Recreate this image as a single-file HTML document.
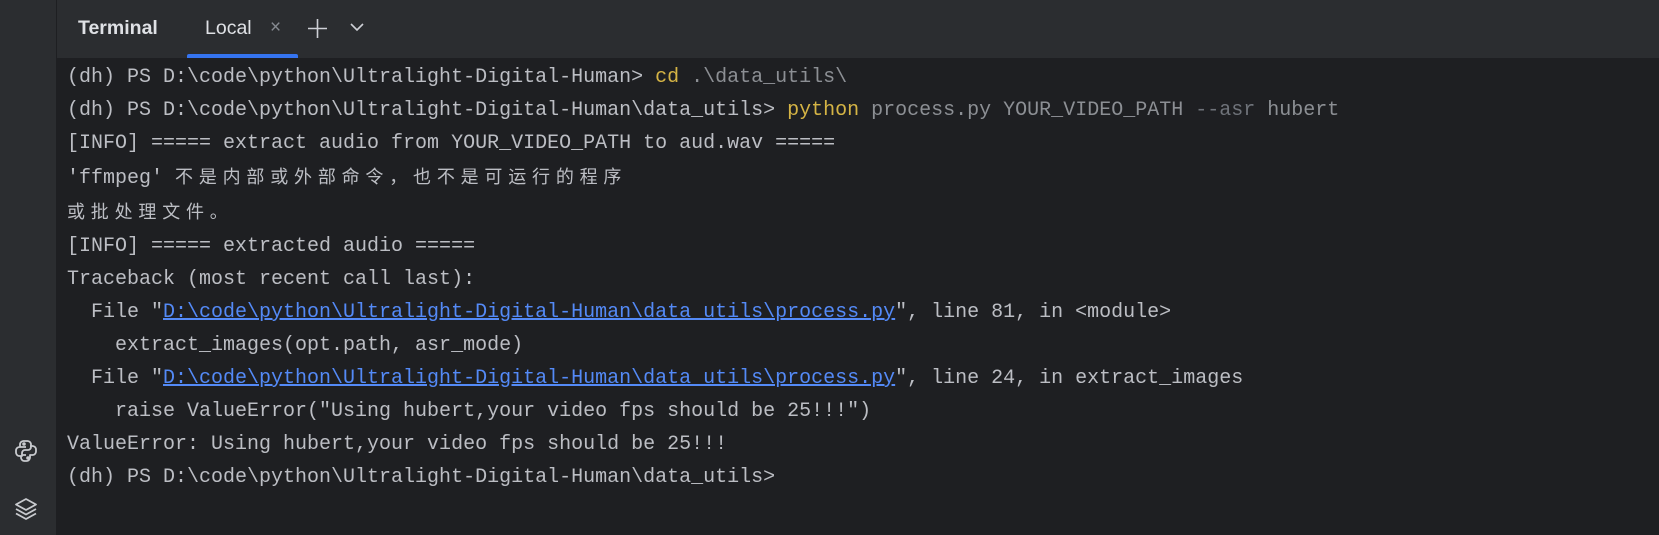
<!DOCTYPE html>
<html><head><meta charset="utf-8"><style>
*{margin:0;padding:0;box-sizing:border-box}
body{width:1659px;height:535px;background:#1e1f22;overflow:hidden;position:relative;font-family:"Liberation Sans",sans-serif}
#side{position:absolute;left:0;top:0;width:57px;height:535px;background:#2b2d30;border-right:1px solid #1e1f22}
#head{position:absolute;left:57px;top:0;right:0;height:58px;background:#2b2d30}
.t{position:absolute;top:17px;font-size:19.5px;color:#dfe1e5}
#term{position:absolute;left:67px;top:61px;font-family:"Liberation Mono",monospace;font-size:20px;line-height:33px;color:#bcbec4;white-space:pre}
.y{color:#d5b445}.g{color:#8c8f94}.d{color:#6f737a}
.l{color:#548af7;text-decoration:underline}
.c{font-family:"Noto Sans CJK SC",sans-serif;font-size:18px;letter-spacing:5.8px;line-height:33px}
</style></head><body>
<div id="side">
<svg style="position:absolute;left:13px;top:438px" width="26" height="26" viewBox="0 0 26 26" fill="none" stroke="#c8cace" stroke-width="1.8" stroke-linejoin="round"><path d="M13 3h-2.5a3.5 3.5 0 0 0-3.5 3.5V9h6M9 9H6.5A3.5 3.5 0 0 0 3 12.5v2A3.5 3.5 0 0 0 6.5 18H9v-3a3 3 0 0 1 3-3h3a3 3 0 0 0 3-3V6.5A3.5 3.5 0 0 0 14.5 3H13"/><path d="M17 8h2.5A3.5 3.5 0 0 1 23 11.5v2a3.5 3.5 0 0 1-3.5 3.5H17v2.5a3.5 3.5 0 0 1-3.5 3.5h-2A3.5 3.5 0 0 1 8 19.5V18M13 17h-4"/><circle cx="11" cy="6" r=".9" fill="#c8cace"/><circle cx="15" cy="20" r=".9" fill="#c8cace"/></svg>
<svg style="position:absolute;left:13px;top:496px" width="26" height="26" viewBox="0 0 26 26" fill="none" stroke="#c8cace" stroke-width="1.8" stroke-linejoin="round"><path d="M13 3l10 5.5-10 5.5L3 8.5z"/><path d="M3 13l10 5.5L23 13"/><path d="M3 17.5l10 5.5 10-5.5"/></svg>
</div>
<div id="head">
<div class="t" style="left:21px;font-weight:bold">Terminal</div>
<div class="t" style="left:148px">Local</div>
<div class="t" style="left:213px;color:#868a91;font-size:19px">×</div>
<svg style="position:absolute;left:250px;top:18px" width="21" height="21" stroke="#ced0d6" stroke-width="1.6"><path d="M10.5 1v19M1 10.5h19"/></svg>
<svg style="position:absolute;left:292px;top:21px" width="16" height="12" fill="none" stroke="#ced0d6" stroke-width="1.6"><path d="M2 3l6 6 6-6"/></svg>
<div style="position:absolute;left:130px;top:54px;width:111px;height:4px;background:#3574f0;border-radius:2px 2px 0 0"></div>
</div>
<div id="term">(dh) PS D:\code\python\Ultralight-Digital-Human&gt; <span class="y">cd</span> <span class="g">.\data_utils\</span>
(dh) PS D:\code\python\Ultralight-Digital-Human\data_utils&gt; <span class="y">python</span> <span class="g">process.py YOUR_VIDEO_PATH</span> <span class="d">--asr</span> <span class="g">hubert</span>
[INFO] ===== extract audio from YOUR_VIDEO_PATH to aud.wav =====
'ffmpeg' <span class="c">不是内部或外部命令，也不是可运行的程序</span>
<span class="c">或批处理文件。</span>
[INFO] ===== extracted audio =====
Traceback (most recent call last):
  File "<span class="l">D:\code\python\Ultralight-Digital-Human\data_utils\process.py</span>", line 81, in &lt;module&gt;
    extract_images(opt.path, asr_mode)
  File "<span class="l">D:\code\python\Ultralight-Digital-Human\data_utils\process.py</span>", line 24, in extract_images
    raise ValueError("Using hubert,your video fps should be 25!!!")
ValueError: Using hubert,your video fps should be 25!!!
(dh) PS D:\code\python\Ultralight-Digital-Human\data_utils&gt;</div>
</body></html>
